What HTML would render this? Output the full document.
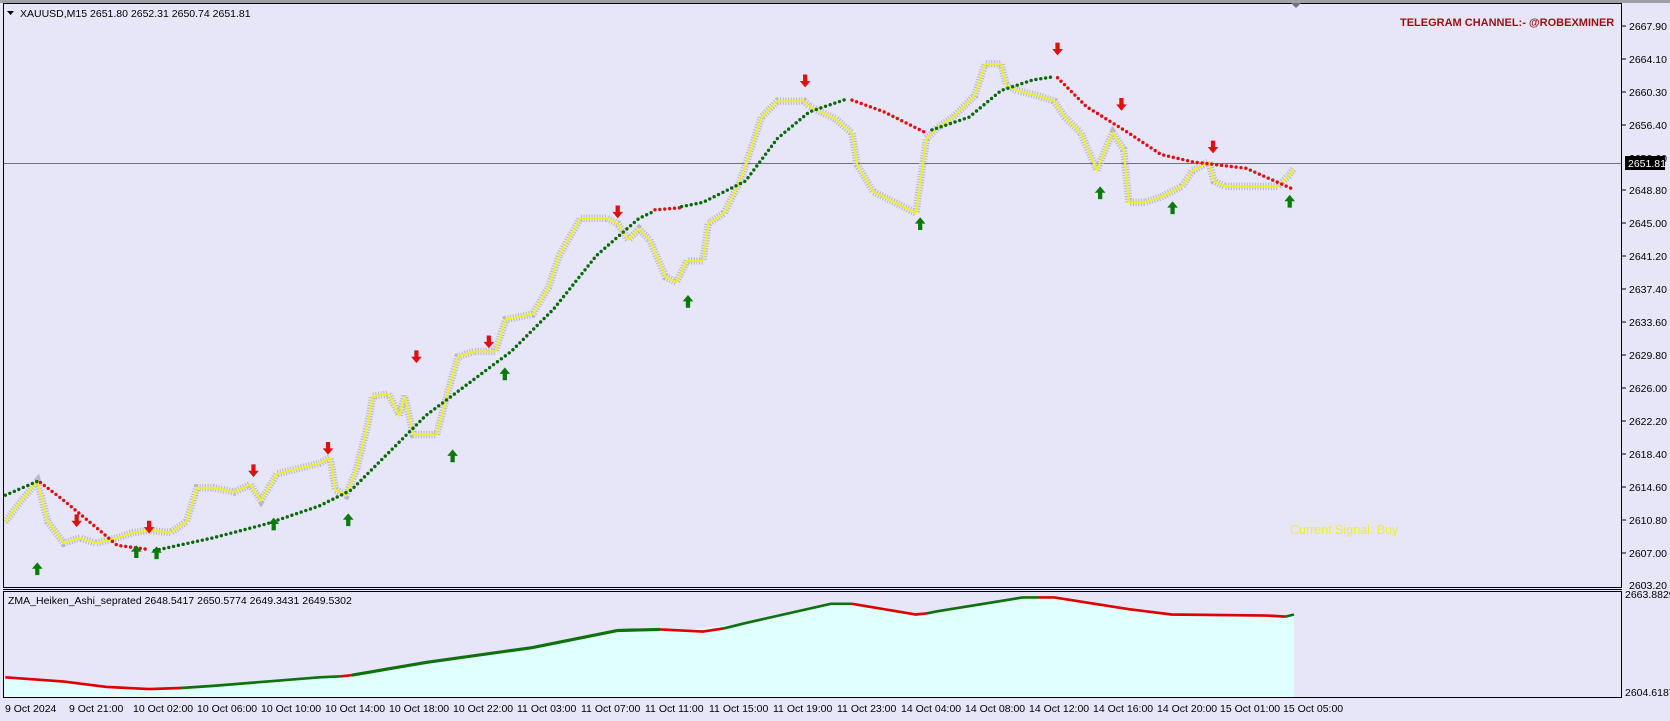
<!DOCTYPE html><html><head><style>
body{margin:0;width:1670px;height:721px;background:#e6e6f8;overflow:hidden}
svg{position:absolute;left:0;top:0}
text{font-family:"Liberation Sans","DejaVu Sans",sans-serif;font-size:10.5px;fill:#000}
</style></head><body>
<svg width="1670" height="721" viewBox="0 0 1670 721">
<rect width="1670" height="721" fill="#e6e6f8"/>
<rect x="0" y="0" width="1670" height="3" fill="#a0a0a8"/>
<line x1="4" y1="163.5" x2="1622" y2="163.5" stroke="#707080" stroke-width="1"/>
<g transform="scale(1.065)">
<polygon fill="#e0ffff" points="4,636 60,640 100,645 140,647 200,644 300,636 400,622 500,608 580,592 640,592 700,585 780,567 800,567 860,577 880,574 960,561 990,561 1060,572 1100,577 1215,578 1215,655 4,655"/>
<g fill="none" stroke-width="2.5">
<polyline stroke="#e00000" points="5,636 60,640 100,645 140,647 170,646"/>
<polyline stroke="#107010" points="170,646 200,644 300,636 320,635"/>
<polyline stroke="#e00000" points="320,635 330,634"/>
<polyline stroke="#107010" stroke-width="3" points="330,634 400,622 500,608 580,592 620,591"/>
<polyline stroke="#e00000" points="620,591 660,593 680,590"/>
<polyline stroke="#107010" points="680,590 700,585 780,567 800,567"/>
<polyline stroke="#e00000" points="800,567 860,577 870,576"/>
<polyline stroke="#107010" points="870,576 880,574 960,561 975,561"/>
<polyline stroke="#e00000" points="975,561 990,561 1060,572 1100,577 1190,578 1207,579"/>
<polyline stroke="#107010" points="1207,579 1215,577"/>
</g>
<polyline fill="none" stroke="#b8b8c8" stroke-width="7" stroke-dasharray="1 1.5" points="5,490 20,470 35,452 45,490 60,510 75,505 90,510 110,505 125,500 140,498 160,500 175,490 185,458 200,458 220,462 235,455 245,470 260,445 280,440 300,435 310,430 315,460 325,465 335,440 345,400 350,372 365,370 375,390 380,372 388,408 410,408 420,370 430,335 445,330 465,330 475,300 500,295 515,270 525,240 545,205 570,205 580,210 590,225 600,215 610,225 625,260 635,265 645,245 660,245 665,210 680,200 695,170 705,140 715,110 730,95 755,95 760,100 785,112 800,125 805,155 820,180 840,190 860,200 870,130 880,120 895,110 905,100 915,90 925,60 940,60 945,80 955,85 975,90 990,95 1000,110 1015,125 1030,160 1040,135 1045,125 1055,140 1060,190 1075,190 1090,185 1110,175 1120,160 1135,152 1140,170 1150,175 1180,175 1200,175 1210,165 1215,158"/>
<polyline fill="none" stroke="#f0f020" stroke-width="1.8" points="5,490 20,470 35,452 45,490 60,510 75,505 90,510 110,505 125,500 140,498 160,500 175,490 185,458 200,458 220,462 235,455 245,470 260,445 280,440 300,435 310,430 315,460 325,465 335,440 345,400 350,372 365,370 375,390 380,372 388,408 410,408 420,370 430,335 445,330 465,330 475,300 500,295 515,270 525,240 545,205 570,205 580,210 590,225 600,215 610,225 625,260 635,265 645,245 660,245 665,210 680,200 695,170 705,140 715,110 730,95 755,95 760,100 785,112 800,125 805,155 820,180 840,190 860,200 870,130 880,120 895,110 905,100 915,90 925,60 940,60 945,80 955,85 975,90 990,95 1000,110 1015,125 1030,160 1040,135 1045,125 1055,140 1060,190 1075,190 1090,185 1110,175 1120,160 1135,152 1140,170 1150,175 1180,175 1200,175 1210,165 1215,158"/>
<g fill="none" stroke-width="3.2" stroke-linecap="round" stroke-dasharray="0 4.6">
<polyline stroke="#0a6a0a" points="5,465 35,452"/>
<polyline stroke="#e01010" points="38,453 60,470 90,495 110,512 140,516"/>
<polyline stroke="#0a6a0a" points="145,517 200,505 250,492 300,475 330,460 360,430 400,390 440,360 480,330 520,290 560,240 600,205 615,198"/>
<polyline stroke="#e01010" points="615,197 640,195"/>
<polyline stroke="#0a6a0a" points="640,194 660,190 700,170 730,130 760,105 795,93"/>
<polyline stroke="#e01010" points="800,94 830,105 870,125"/>
<polyline stroke="#0a6a0a" points="875,122 910,110 940,85 970,75 990,72"/>
<polyline stroke="#e01010" points="993,73 1020,100 1060,125 1090,145 1120,152 1170,158 1215,178"/>
</g>
<g fill="#e01010">
<path d="M-2,-7h4v6h3l-5,6l-5,-6h3z" transform="translate(72,490)"/>
<path d="M-2,-7h4v6h3l-5,6l-5,-6h3z" transform="translate(140,496)"/>
<path d="M-2,-7h4v6h3l-5,6l-5,-6h3z" transform="translate(238,443)"/>
<path d="M-2,-7h4v6h3l-5,6l-5,-6h3z" transform="translate(308,422)"/>
<path d="M-2,-7h4v6h3l-5,6l-5,-6h3z" transform="translate(391,336)"/>
<path d="M-2,-7h4v6h3l-5,6l-5,-6h3z" transform="translate(459,322)"/>
<path d="M-2,-7h4v6h3l-5,6l-5,-6h3z" transform="translate(580,200)"/>
<path d="M-2,-7h4v6h3l-5,6l-5,-6h3z" transform="translate(756,77)"/>
<path d="M-2,-7h4v6h3l-5,6l-5,-6h3z" transform="translate(993,47)"/>
<path d="M-2,-7h4v6h3l-5,6l-5,-6h3z" transform="translate(1053,99)"/>
<path d="M-2,-7h4v6h3l-5,6l-5,-6h3z" transform="translate(1139,139)"/>
</g>
<g fill="#0a7a0a">
<path d="M-2,7h4v-6h3l-5,-6l-5,6h3z" transform="translate(35,533)"/>
<path d="M-2,7h4v-6h3l-5,-6l-5,6h3z" transform="translate(128,517)"/>
<path d="M-2,7h4v-6h3l-5,-6l-5,6h3z" transform="translate(147,518)"/>
<path d="M-2,7h4v-6h3l-5,-6l-5,6h3z" transform="translate(257,491)"/>
<path d="M-2,7h4v-6h3l-5,-6l-5,6h3z" transform="translate(327,487)"/>
<path d="M-2,7h4v-6h3l-5,-6l-5,6h3z" transform="translate(425,427)"/>
<path d="M-2,7h4v-6h3l-5,-6l-5,6h3z" transform="translate(474,350)"/>
<path d="M-2,7h4v-6h3l-5,-6l-5,6h3z" transform="translate(646,282)"/>
<path d="M-2,7h4v-6h3l-5,-6l-5,6h3z" transform="translate(864,209)"/>
<path d="M-2,7h4v-6h3l-5,-6l-5,6h3z" transform="translate(1033,180)"/>
<path d="M-2,7h4v-6h3l-5,-6l-5,6h3z" transform="translate(1101,194)"/>
<path d="M-2,7h4v-6h3l-5,-6l-5,6h3z" transform="translate(1211,188)"/>
</g>
</g>
<rect x="3.5" y="3.5" width="1618" height="584" fill="none" stroke="#000"/>
<line x1="3" y1="589.5" x2="1622" y2="589.5" stroke="#000"/>
<rect x="3.5" y="591.5" width="1618" height="106" fill="none" stroke="#000"/>
<path d="M1291,3l5,5l5,-5z" fill="#707080"/>
<path d="M7,11h7l-3.5,4z" fill="#000"/>
<text x="20" y="17">XAUUSD,M15  2651.80 2652.31 2650.74 2651.81</text>
<text x="1400" y="26" style="font-weight:bold;fill:#9a1010;font-size:11px">TELEGRAM CHANNEL:- @ROBEXMINER</text>
<text x="1290" y="534" style="fill:#f0f020;font-size:12.5px">Current Signal: Buy</text>
<text x="8" y="604">ZMA_Heiken_Ashi_seprated 2648.5417 2650.5774 2649.3431 2649.5302</text>
<g>
<text x="1629" y="30">2667.90</text><text x="1629" y="63">2664.10</text><text x="1629" y="96">2660.30</text>
<text x="1629" y="129">2656.40</text><text x="1629" y="162">2652.60</text><text x="1629" y="194">2648.80</text>
<text x="1629" y="227">2645.00</text><text x="1629" y="260">2641.20</text><text x="1629" y="293">2637.40</text>
<text x="1629" y="326">2633.60</text><text x="1629" y="359">2629.80</text><text x="1629" y="392">2626.00</text>
<text x="1629" y="425">2622.20</text><text x="1629" y="458">2618.40</text><text x="1629" y="491">2614.60</text>
<text x="1629" y="524">2610.80</text><text x="1629" y="557">2607.00</text><text x="1629" y="589">2603.20</text>
</g>
<g stroke="#000"><line x1="1622" y1="26" x2="1626" y2="26"/><line x1="1622" y1="59" x2="1626" y2="59"/><line x1="1622" y1="92" x2="1626" y2="92"/><line x1="1622" y1="125" x2="1626" y2="125"/><line x1="1622" y1="190" x2="1626" y2="190"/><line x1="1622" y1="223" x2="1626" y2="223"/><line x1="1622" y1="256" x2="1626" y2="256"/><line x1="1622" y1="289" x2="1626" y2="289"/><line x1="1622" y1="322" x2="1626" y2="322"/><line x1="1622" y1="355" x2="1626" y2="355"/><line x1="1622" y1="388" x2="1626" y2="388"/><line x1="1622" y1="421" x2="1626" y2="421"/><line x1="1622" y1="454" x2="1626" y2="454"/><line x1="1622" y1="487" x2="1626" y2="487"/><line x1="1622" y1="520" x2="1626" y2="520"/><line x1="1622" y1="553" x2="1626" y2="553"/></g>
<rect x="1625" y="156" width="40" height="14" fill="#000"/>
<text x="1628" y="167" style="fill:#fff">2651.81</text>
<text x="1625" y="598">2663.8829</text>
<text x="1625" y="696">2604.6187</text>
<g>
<text x="5" y="712">9 Oct 2024</text><text x="69" y="712">9 Oct 21:00</text><text x="133" y="712">10 Oct 02:00</text>
<text x="197" y="712">10 Oct 06:00</text><text x="261" y="712">10 Oct 10:00</text><text x="325" y="712">10 Oct 14:00</text>
<text x="389" y="712">10 Oct 18:00</text><text x="453" y="712">10 Oct 22:00</text><text x="517" y="712">11 Oct 03:00</text>
<text x="581" y="712">11 Oct 07:00</text><text x="645" y="712">11 Oct 11:00</text><text x="709" y="712">11 Oct 15:00</text>
<text x="773" y="712">11 Oct 19:00</text><text x="837" y="712">11 Oct 23:00</text><text x="901" y="712">14 Oct 04:00</text>
<text x="965" y="712">14 Oct 08:00</text><text x="1029" y="712">14 Oct 12:00</text><text x="1093" y="712">14 Oct 16:00</text>
<text x="1157" y="712">14 Oct 20:00</text><text x="1220" y="712">15 Oct 01:00</text><text x="1283" y="712">15 Oct 05:00</text>
</g>
</svg>
</body></html>
